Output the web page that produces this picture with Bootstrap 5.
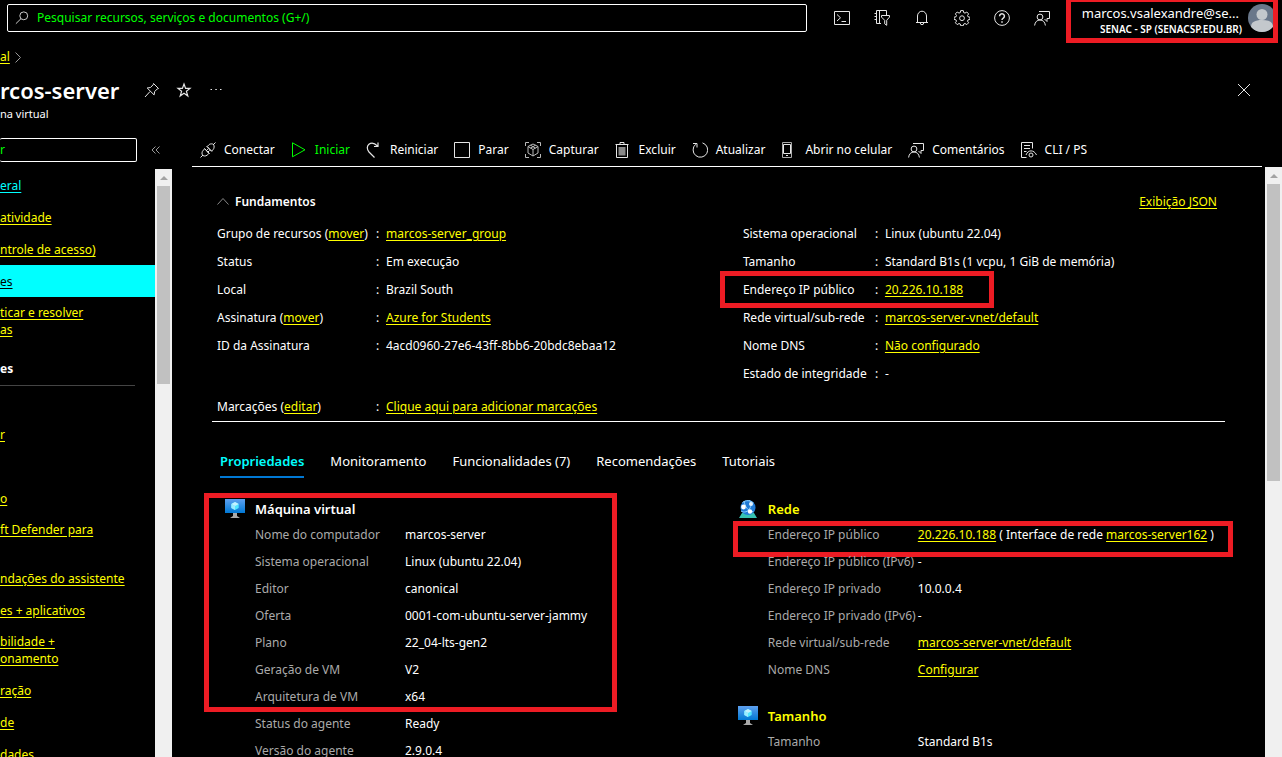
<!DOCTYPE html>
<html lang="pt-BR">
<head>
<meta charset="utf-8">
<meta name="viewport" content="width=device-width, initial-scale=1">
<title>marcos-server - Máquina virtual</title>
<link href="https://cdn.jsdelivr.net/npm/bootstrap@5.3.0/dist/css/bootstrap.min.css" rel="stylesheet">
<style>
  body { background: #000; color: #fff; font-family: "Noto Sans", "Open Sans", sans-serif; font-size: 12px; line-height: 16px; }
  a { color: #ff0; text-underline-offset: 2px; }
  a:hover { color: #0ff; }
  h1, h2, h3, dl, dd, dt, ul { margin: 0; font-weight: 400; }
  svg { display: block; flex: none; }
  .ico { width: 16px; height: 16px; fill: none; stroke: #e6e6e6; stroke-width: 1; }
  .ico.dim { stroke: #999; }
  .plain { background: none; border: 0; padding: 0; color: #fff; display: flex; align-items: center; }
  .red-frame { position: absolute; border: 5px solid #ed1c24; pointer-events: none; }

  /* top bar */
  .topbar { height: 44px; padding-left: 7px; }
  .search-box { height: 28px; margin-top: 4px; border: 1px solid #fff; border-radius: 2px; padding-left: 7px; }
  .search-box input, .filter-box input { background: none; border: 0; outline: 0; color: #0f0; padding: 0; width: 100%; }
  .search-box input::placeholder, .filter-box input::placeholder { color: #0f0; opacity: 1; }
  .search-box .ico { width: 14px; height: 14px; }
  .top-icons { gap: 24px; height: 36px; margin: 0 16px 0 27px; }
  .account { width: 212px; height: 43px; border: 5px solid #ed1c24; border-top-width: 2px; margin-right: 4px; overflow: hidden; }
  .account-text { width: 164px; margin-left: 7px; padding-top: 3px; text-align: right; }
  .account-text small { font-size: 10px; font-weight: 600; line-height: 16px; }
  .account-name { font-size: 13px; line-height: 16px; padding-right: 3px; }
  .avatar { margin: 2px 0 0 6px; }

  /* heading */
  .title-row { height: 30px; margin-top: 10px; padding-right: 30px; }
  .title-row h1 { font-size: 22px; font-weight: 600; line-height: 30px; width: 120px; }
  .crumbs { margin-top: 5px; }
  .sub { font-size: 11px; line-height: 18px; }

  /* side menu */
  .side { width: 172px; margin-right: 20px; }
  .filter-row { padding: 7px 0; }
  .filter-box { width: 137px; height: 24px; border: 1px solid #fff; border-left: 0; border-radius: 2px; }
  .side-list { width: 155px; white-space: nowrap; }
  .side-list a { display: flex; align-items: center; min-height: 32px; padding: 7px 0; line-height: 17px; }
  .side-list a.cyan-link { color: #0ff; }
  .side-list a.current { background: #0ff; color: #000; }
  .side-list a.two-lines { min-height: 48px; align-items: flex-start; }
  .side-list h2 { font-size: 12px; font-weight: 700; line-height: 16px; margin: 16px 20px 18px 0; padding-bottom: 8px; border-bottom: 1px solid #444; }
  .gap-above { margin-top: 32px; }
  .track { width: 17px; background: #f0f0f0; padding: 0 2px; }
  .track::before { content: ""; display: block; border: 4px solid transparent; border-top: 0; border-bottom-color: #a3a3a3; margin: 7px auto 6px; width: 0; }
  .thumb { background: #c1c1c1; }
  .thumb-side { height: 198px; }
  .thumb-main { height: 297px; }

  /* commands */
  .commands { height: 36px; gap: 16px; padding: 2px 0 0 8px; border-bottom: 1px solid #fff; margin-right: 20px; white-space: nowrap; }
  .commands .plain { gap: 8px; }
  .commands .go { color: #0f0; }
  .commands .go .ico { stroke: #0f0; }

  /* essentials */
  .essentials { margin: 27px 40px 0 20px; border-bottom: 1px solid #fff; padding-left: 5px; }
  .essentials h2 { font-size: 12px; font-weight: 600; line-height: 16px; }
  .ess-grid { display: grid; grid-template-columns: 12fr 11fr; margin-top: 10px; margin-bottom: 5px; }
  .pair { display: grid; grid-template-columns: 159px 10px 1fr; line-height: 28px; white-space: nowrap; position: relative; }
  .ess-right .pair { grid-template-columns: 132px 10px 1fr; }
  .frame-ip { inset: -5px auto -4px -23px; width: 274px; }

  /* tabs and properties */
  .tab-list { gap: 26px; margin: 29px 40px 0 28px; font-size: 13px; line-height: 20px; }
  .tab-list .plain { padding-bottom: 5px; border-bottom: 2px solid transparent; white-space: nowrap; }
  .tab-list .active { color: #0ff; font-weight: 600; border-color: #0078d4; }
  .props { display: grid; grid-template-columns: 20fr 19fr; margin: 20px 40px 0 33px; }
  .prop-group { padding-left: 30px; position: relative; margin-bottom: 22px; }
  .prop-group h3 { font-size: 13px; font-weight: 600; line-height: 22px; margin-bottom: 1px; }
  .prop-group h3 svg { margin: 0 10px 0 -30px; }
  .kv { display: grid; grid-template-columns: 150px 1fr; line-height: 27px; white-space: nowrap; position: relative; }
  .kv dt { color: #aaa; }
  .frame-vm { inset: -5px auto auto -21px; width: 413px; height: 219px; }
  .frame-net { inset: 0 auto auto -35px; width: 500px; height: 36px; }
</style>
</head>
<body class="vh-100 d-flex flex-column overflow-hidden">

<svg width="0" height="0" class="position-absolute" aria-hidden="true">
  <defs>
    <linearGradient id="screen" x1="0" y1="0" x2="0" y2="1"><stop offset="0" stop-color="#5ea0ef"/><stop offset="1" stop-color="#0078d4"/></linearGradient>
    <symbol id="vm" viewBox="0 0 20 20">
      <path d="M0 0h20v14H0z" fill="url(#screen)"/>
      <path d="M10 3l3.700 2v4L10 11 6.300 9V5z" fill="#50e6ff"/><path d="M10 3l3.700 2L10 7 6.300 5z" fill="#c3f1ff"/><path d="M6.300 5L10 7v4L6.300 9z" fill="#9cebff"/>
      <path d="M8 14h4v3l3 2H5l3-2z" fill="#a9a9a9"/>
    </symbol>
    <symbol id="feedback" viewBox="0 0 16 16">
      <path d="M5 1.500h10.500v7H13v3L10.500 9"/><circle cx="6" cy="7" r="2.900"/><path d="M.6 15.500C1 12 3 10 6 10s5 2 5.400 5.500"/>
    </symbol>
  </defs>
</svg>

<header class="topbar d-flex flex-shrink-0 align-items-start">
  <label class="search-box d-flex flex-grow-1 align-items-center gap-2">
    <svg class="ico" viewBox="0 0 16 16"><circle cx="10" cy="5.500" r="4.500"/><path d="M6.900 8.700L1 14.500"/></svg>
    <input type="search" aria-label="Pesquisar" placeholder="Pesquisar recursos, serviços e documentos (G+/)">
  </label>
  <div class="top-icons d-flex align-items-center">
    <button class="plain" aria-label="Cloud Shell"><svg class="ico" viewBox="0 0 16 16"><path d="M.5 1.500h15v13H.5zM3 4.500l3.500 3.300L3 11M7.500 11.500H12"/></svg></button>
    <button class="plain" aria-label="Diretórios"><svg class="ico" viewBox="0 0 16 16"><path d="M7 13.500H2.500v-13H12.500V5M5.500 .5v13M.5 3.500h2M.5 6.500h2M.5 9.500h2M7.500 5.500h8v1.600l-2.800 3.200v5l-2-1.500v-3.500L7.500 7.100z"/></svg></button>
    <button class="plain" aria-label="Notificações"><svg class="ico" viewBox="0 0 16 16"><path d="M2 12.500h12M3.500 12.500V6a4.500 4.800 0 0 1 9 0v6.500M6.300 13a1.700 1.700 0 0 0 3.400 0"/></svg></button>
    <button class="plain" aria-label="Configurações"><svg class="ico" viewBox="0 0 16 16"><path d="M6.700.6h2.600l.4 2 1.300.5L12.800 2l1.800 1.900-1.100 1.700.5 1.200 1.900.4v2.200l-1.900.5-.5 1.200 1.100 1.700-1.800 1.800-1.800-1.100-1.300.5-.4 1.700H6.700l-.4-1.700-1.300-.5-1.800 1.100-1.800-1.800 1.100-1.700L2 9.900.1 9.400V7.200L2 6.800l.5-1.200-1.100-1.700L3.200 2 5 3.100l1.300-.5z"/><circle cx="8" cy="8.200" r="2.400"/></svg></button>
    <button class="plain" aria-label="Ajuda"><svg class="ico" viewBox="0 0 16 16"><circle cx="8" cy="8" r="7.400"/><path d="M5.600 6.200a2.400 2.300 0 1 1 3.700 1.900C8.300 8.700 8 9 8 10.100M8 11.300v1.500" stroke-width="1.500"/></svg></button>
    <button class="plain" aria-label="Comentários"><svg class="ico"><use href="#feedback"/></svg></button>
  </div>
  <div class="account d-flex flex-shrink-0">
    <div class="account-text flex-shrink-0">
      <div class="account-name">marcos.vsalexandre@se...</div>
      <small class="d-block text-nowrap">SENAC - SP (SENACSP.EDU.BR)</small>
    </div>
    <svg class="avatar" width="28" height="28" viewBox="0 0 28 28"><clipPath id="round"><circle cx="14" cy="14" r="14"/></clipPath><g clip-path="url(#round)"><path d="M0 0h28v28H0z" fill="#69778a"/><circle cx="14" cy="10.500" r="5.500" fill="#c3c8cc"/><path d="M3 28v-5c0-5 4-7 11-7s11 2 11 7v5z" fill="#c3c8cc"/></g></svg>
  </div>
</header>

<nav class="crumbs d-flex align-items-center flex-shrink-0" aria-label="Trilha">
  <a href="#">al</a>
  <svg class="ico dim" viewBox="0 0 16 16"><path d="M5.500 3.500l5 5-5 5"/></svg>
</nav>

<div class="title-row d-flex align-items-center flex-shrink-0">
  <h1 class="text-nowrap">rcos-server</h1>
  <button class="plain ms-4" aria-label="Fixar"><svg class="ico" viewBox="0 0 16 16"><path d="M9.500 1.500l5 5-1.200.4-2.600 2.600-.6 3.400-6.900-6.900 3.300-.5 2.700-2.800zM6 9.500L1 15"/></svg></button>
  <button class="plain ms-3" aria-label="Favorito"><svg class="ico" viewBox="0 0 16 16"><path d="M8 2l1.600 4.400h4.400l-3.600 2.900 1.400 4.700L8 11.300 4.200 14l1.400-4.700L2 6.400h4.400z" stroke-width="1.200"/></svg></button>
  <button class="plain ms-3" aria-label="Mais"><svg class="ico" viewBox="0 0 16 16"><path d="M2.500 7.500H4M7.300 7.500h1.500M12 7.500h1.500"/></svg></button>
  <button class="plain ms-auto" aria-label="Fechar"><svg class="ico" viewBox="-2 -2 16 16"><path d="M0 0l12 12M12 0L0 12"/></svg></button>
</div>
<div class="sub flex-shrink-0">na virtual</div>

<div class="d-flex flex-grow-1 mt-2 overflow-hidden">
  <aside class="side d-flex flex-column flex-shrink-0 overflow-hidden">
    <div class="filter-row d-flex align-items-center">
      <label class="filter-box d-flex align-items-center"><input type="search" aria-label="Pesquisar no menu" placeholder="r"></label>
      <button class="plain ms-2 ps-1" aria-label="Recolher"><svg class="ico dim" viewBox="0 0 16 16"><path d="M6.500 4.500L3 8l3.500 3.500M10.500 4.500L7 8l3.500 3.500"/></svg></button>
    </div>
    <div class="d-flex flex-grow-1">
      <div class="side-list">
        <a class="cyan-link" href="#">eral</a>
        <a href="#">atividade</a>
        <a href="#">ntrole de acesso)</a>
        <a class="current" href="#">es</a>
        <a href="#">ticar e resolver<br>as</a>
        <h2>es</h2>
        <a class="gap-above" href="#">r</a>
        <a class="gap-above" href="#">o</a>
        <a class="two-lines" href="#">ft Defender para</a>
        <a href="#">ndações do assistente</a>
        <a href="#">es + aplicativos</a>
        <a href="#">bilidade +<br>onamento</a>
        <a href="#">ração</a>
        <a href="#">de</a>
        <a href="#">dades</a>
      </div>
      <div class="track"><div class="thumb thumb-side"></div></div>
    </div>
  </aside>

  <main class="d-flex flex-column flex-grow-1 overflow-hidden">
    <div class="commands d-flex flex-shrink-0">
      <button class="plain"><svg class="ico" viewBox="0 0 16 16"><path d="M.5 15.500L3 13M15.500.5L13 3M7.200 4.500l1.700-1.700c1.500-1.500 5-1 4.800.2.700.6.600 3.500-.7 4.700l-1.500 1.500zM8.800 11.500l-1.700 1.700c-1.500 1.300-4.400.8-4.600-.2-.8-1-.7-3.200.6-4.700l1.700-1.500zM4.500 6.500l5.200 5.200M6.700 4.300l5.200 5.200M6.600 8.500l1.700-1.700M8 10l1.700-1.700"/></svg>Conectar</button>
      <button class="plain go"><svg class="ico" viewBox="0 0 16 16"><path d="M1.500.8v14L14 7.800z"/></svg>Iniciar</button>
      <button class="plain"><svg class="ico" viewBox="0 0 16 16"><path d="M8.500 15.500L3 10C-2 4 5-2.500 11.500 4M12 .5v4H8" stroke-width="1.200"/></svg>Reiniciar</button>
      <button class="plain"><svg class="ico" viewBox="0 0 16 16"><path d="M.5.500h15v15H.5z"/></svg>Parar</button>
      <button class="plain"><svg class="ico" viewBox="0 0 16 16"><path d="M.5 4V.5H4M12 .5h3.500V4M15.500 12v3.500H12M4 15.500H.5V12M8 2l5 2.500v6.500L8 14l-5-3V4.500zM3 4.500L8 7.500l5-3M8 7.500V14M5.500 3.200l5 3M10.500 3.200l-5 3" stroke="#bbb"/></svg>Capturar</button>
      <button class="plain"><svg class="ico" viewBox="0 0 16 16"><path d="M3.500 5h7v8.500h-7z" fill="#888" stroke="none"/><path d="M.5 2.500h13M5 2.500V.5h4v2M1.500 2.500v13h11v-13"/></svg>Excluir</button>
      <button class="plain"><svg class="ico" viewBox="0 0 16 16"><path d="M10.500.9A7.300 7.300 0 1 1 3.700 2.300M1 1.500h4v4"/></svg>Atualizar</button>
      <button class="plain"><svg class="ico" viewBox="0 0 16 16"><path d="M1.500.5h9v15h-9z" stroke="#aaa"/><path d="M2.500 2.500h7v9h-7zM5 13.500h2"/></svg>Abrir no celular</button>
      <button class="plain"><svg class="ico"><use href="#feedback"/></svg>Comentários</button>
      <button class="plain"><svg class="ico" viewBox="0 0 16 16"><path d="M5.500 15.500H.5V.5h11v6M3 3.500h6M3 6.500h6M3 9.500h2.500M5 13c2-5.500 8-5.500 10.500 0"/><circle cx="10" cy="13" r="2"/></svg>CLI / PS</button>
    </div>

    <div class="d-flex flex-grow-1 overflow-hidden">
      <div class="flex-grow-1 overflow-hidden">
        <section class="essentials">
          <div class="d-flex align-items-center justify-content-between pe-2">
            <h2 class="d-flex align-items-center gap-1"><svg width="14" height="14" viewBox="0 0 14 14" fill="none" stroke="#888"><path d="M.5 9.500l5.500-6 5.500 6"/></svg>Fundamentos</h2>
            <a href="#">Exibição JSON</a>
          </div>
          <div class="ess-grid">
            <dl>
              <div class="pair"><dt>Grupo de recursos (<a href="#">mover</a>)</dt><span>:</span><dd><a href="#">marcos-server_group</a></dd></div>
              <div class="pair"><dt>Status</dt><span>:</span><dd>Em execução</dd></div>
              <div class="pair"><dt>Local</dt><span>:</span><dd>Brazil South</dd></div>
              <div class="pair"><dt>Assinatura (<a href="#">mover</a>)</dt><span>:</span><dd><a href="#">Azure for Students</a></dd></div>
              <div class="pair"><dt>ID da Assinatura</dt><span>:</span><dd>4acd0960-27e6-43ff-8bb6-20bdc8ebaa12</dd></div>
            </dl>
            <dl class="ess-right">
              <div class="pair"><dt>Sistema operacional</dt><span>:</span><dd>Linux (ubuntu 22.04)</dd></div>
              <div class="pair"><dt>Tamanho</dt><span>:</span><dd>Standard B1s (1 vcpu, 1 GiB de memória)</dd></div>
              <div class="pair"><dt>Endereço IP público</dt><span>:</span><dd><a href="#">20.226.10.188</a></dd><i class="red-frame frame-ip"></i></div>
              <div class="pair"><dt>Rede virtual/sub-rede</dt><span>:</span><dd><a href="#">marcos-server-vnet/default</a></dd></div>
              <div class="pair"><dt>Nome DNS</dt><span>:</span><dd><a href="#">Não configurado</a></dd></div>
              <div class="pair"><dt>Estado de integridade</dt><span>:</span><dd>-</dd></div>
            </dl>
          </div>
          <dl class="pair"><dt>Marcações (<a href="#">editar</a>)</dt><span>:</span><dd><a href="#">Clique aqui para adicionar marcações</a></dd></dl>
        </section>

        <div class="tab-list d-flex" role="tablist">
          <button class="plain active" role="tab" aria-selected="true">Propriedades</button>
          <button class="plain" role="tab">Monitoramento</button>
          <button class="plain" role="tab">Funcionalidades (7)</button>
          <button class="plain" role="tab">Recomendações</button>
          <button class="plain" role="tab">Tutoriais</button>
        </div>

        <div class="props">
          <section class="prop-group">
            <i class="red-frame frame-vm"></i>
            <h3 class="d-flex align-items-center"><svg width="20" height="20"><use href="#vm"/></svg>Máquina virtual</h3>
            <dl>
              <div class="kv"><dt>Nome do computador</dt><dd>marcos-server</dd></div>
              <div class="kv"><dt>Sistema operacional</dt><dd>Linux (ubuntu 22.04)</dd></div>
              <div class="kv"><dt>Editor</dt><dd>canonical</dd></div>
              <div class="kv"><dt>Oferta</dt><dd>0001-com-ubuntu-server-jammy</dd></div>
              <div class="kv"><dt>Plano</dt><dd>22_04-lts-gen2</dd></div>
              <div class="kv"><dt>Geração de VM</dt><dd>V2</dd></div>
              <div class="kv"><dt>Arquitetura de VM</dt><dd>x64</dd></div>
              <div class="kv"><dt>Status do agente</dt><dd>Ready</dd></div>
              <div class="kv"><dt>Versão do agente</dt><dd>2.9.0.4</dd></div>
            </dl>
          </section>
          <div>
            <section class="prop-group">
              <h3 class="d-flex align-items-center"><svg width="20" height="20" viewBox="0 0 20 20"><path d="M4 14h12l3 5H1z" fill="#37c2b1"/><circle cx="10" cy="8.500" r="7.500" fill="#1f7ad6"/><path d="M4.500 3.500C8 1 12 1 15.500 4M3 12c3 2 7 1 9-3s1-6-1-8M6 2c1 6 4 10 9.500 11" fill="none" stroke="#8cd0ff" stroke-width="1"/><circle cx="5.500" cy="8" r="2.400" fill="#fff"/><circle cx="13" cy="5" r="2" fill="#e3f4ff"/><circle cx="12" cy="12.500" r="2.200" fill="#fff"/></svg><a class="text-decoration-none" href="#">Rede</a></h3>
              <dl>
                <div class="kv"><dt>Endereço IP público</dt><dd><a href="#">20.226.10.188</a> ( Interface de rede <a href="#">marcos-server162</a> )</dd><i class="red-frame frame-net"></i></div>
                <div class="kv"><dt>Endereço IP público (IPv6)</dt><dd>-</dd></div>
                <div class="kv"><dt>Endereço IP privado</dt><dd>10.0.0.4</dd></div>
                <div class="kv"><dt>Endereço IP privado (IPv6)</dt><dd>-</dd></div>
                <div class="kv"><dt>Rede virtual/sub-rede</dt><dd><a href="#">marcos-server-vnet/default</a></dd></div>
                <div class="kv"><dt>Nome DNS</dt><dd><a href="#">Configurar</a></dd></div>
              </dl>
            </section>
            <section class="prop-group">
              <h3 class="d-flex align-items-center"><svg width="20" height="20"><use href="#vm"/></svg><a class="text-decoration-none" href="#">Tamanho</a></h3>
              <dl>
                <div class="kv"><dt>Tamanho</dt><dd>Standard B1s</dd></div>
              </dl>
            </section>
          </div>
        </div>
      </div>
      <div class="track flex-shrink-0"><div class="thumb thumb-main"></div></div>
    </div>
  </main>
</div>

<script src="https://cdn.jsdelivr.net/npm/bootstrap@5.3.0/dist/js/bootstrap.bundle.min.js"></script>
</body>
</html>
